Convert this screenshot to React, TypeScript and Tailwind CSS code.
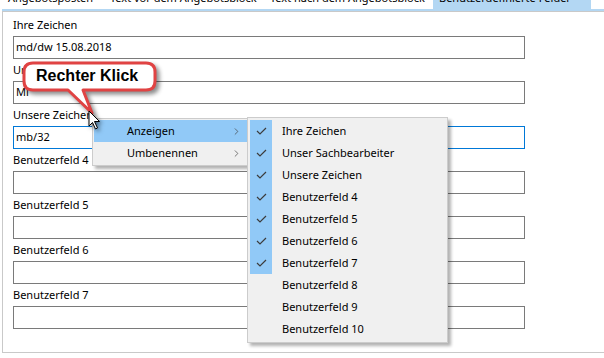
import { ChevronRight } from "lucide-react";

const fields = [
  { label: "Ihre Zeichen", value: "md/dw 15.08.2018" },
  { label: "Unser Sachbearbeiter", value: "Mi" },
  { label: "Unsere Zeichen", value: "mb/32", focused: true },
  { label: "Benutzerfeld 4", value: "" },
  { label: "Benutzerfeld 5", value: "" },
  { label: "Benutzerfeld 6", value: "" },
  { label: "Benutzerfeld 7", value: "" },
];

const subItems = [
  { label: "Ihre Zeichen", checked: true },
  { label: "Unser Sachbearbeiter", checked: true },
  { label: "Unsere Zeichen", checked: true },
  { label: "Benutzerfeld 4", checked: true },
  { label: "Benutzerfeld 5", checked: true },
  { label: "Benutzerfeld 6", checked: true },
  { label: "Benutzerfeld 7", checked: true },
  { label: "Benutzerfeld 8", checked: false },
  { label: "Benutzerfeld 9", checked: false },
  { label: "Benutzerfeld 10", checked: false },
];

function Check() {
  return (
    <svg width="11" height="8" viewBox="0 0 11 8" fill="none">
      <path d="M1 4 L4 7 L10 1" stroke="#3c3c3c" strokeWidth="1.2" />
    </svg>
  );
}

export default function App() {
  return (
    <div className="relative h-[358px] w-[604px] overflow-hidden bg-white font-['Noto_Sans',sans-serif] text-[11px] text-black">
      {/* tab strip, mostly scrolled off the top */}
      <div className="-mt-[13px] flex h-[22px] pl-[2px]">
        <div className="w-[102px] overflow-hidden whitespace-nowrap pl-[6px] pt-[3px] leading-[16px]">Angebotsposten</div>
        <div className="w-[160px] overflow-hidden whitespace-nowrap pl-[6px] pt-[3px] leading-[16px]">Text vor dem Angebotsblock</div>
        <div className="w-[169px] overflow-hidden whitespace-nowrap pl-[6px] pt-[3px] leading-[16px]">Text nach dem Angebotsblock</div>
        <div className="w-[158px] overflow-hidden whitespace-nowrap bg-[#b3d7f3] pl-[6px] pt-[3px] leading-[16px]">Benutzerdefinierte Felder</div>
      </div>
      <div className="ml-[2px] h-[2px] bg-[#b3d7f3]" />

      {/* panel */}
      <div className="ml-[2px] w-[620px] border-b border-l border-t border-[#c9c9c9] pb-[23px] pl-[10px] pt-[2px]">
        {fields.map((f) => (
          <div key={f.label}>
            <div className="h-[22px] pt-[3px] leading-[16px]">{f.label}</div>
            <div
              className={
                f.focused
                  ? "flex h-[23px] w-[512px] items-center border border-[#0078d7] px-[2px]"
                  : "flex h-[23px] w-[512px] items-center border border-[#7a7a7a] px-[2px]"
              }
            >
              {f.value}
            </div>
          </div>
        ))}
      </div>

      {/* context menu */}
      <div className="absolute left-[92px] top-[118px] w-[157px] border border-[#cccccc] bg-[#f0f0f0] p-[1px] shadow-[3px_3px_3px_rgba(0,0,0,0.3)]">
        <div className="flex h-[22px] items-center bg-[#91c9f7] pl-[33px] pr-[5px]">
          <span className="flex-1">Anzeigen</span>
          <ChevronRight size={11} strokeWidth={1.5} className="text-[#404040]" />
        </div>
        <div className="flex h-[22px] items-center pl-[33px] pr-[5px]">
          <span className="flex-1">Umbenennen</span>
          <ChevronRight size={11} strokeWidth={1.5} className="text-[#404040]" />
        </div>
      </div>

      {/* submenu */}
      <div className="absolute left-[247px] top-[117px] w-[201px] border border-[#cccccc] bg-[#f0f0f0] p-[2px] shadow-[3px_3px_3px_rgba(0,0,0,0.3)]">
        {subItems.map((it) => (
          <div key={it.label} className="flex h-[22px] items-center">
            <div className={it.checked ? "flex h-[22px] w-[22px] items-center justify-center bg-[#91c9f7]" : "h-[22px] w-[22px]"}>
              {it.checked && <Check />}
            </div>
            <span className="pl-[10px]">{it.label}</span>
          </div>
        ))}
      </div>

      {/* callout */}
      <svg
        className="absolute left-[18px] top-[58px] drop-shadow-[3px_3px_2px_rgba(0,0,0,0.45)]"
        width="150"
        height="62"
        viewBox="0 0 150 62"
      >
        <path
          d="M15 5 H128 Q137 5 137 14 V23 Q137 32 128 32 H65 L74 55 L50 32 H15 Q6 32 6 23 V14 Q6 5 15 5 Z"
          fill="white"
          stroke="#e04343"
          strokeWidth="3"
          strokeLinejoin="round"
        />
      </svg>
      <div className="absolute left-[36px] top-[67px] font-['Liberation_Sans',Arial,sans-serif] text-[16px] font-bold leading-[18px]">
        Rechter Klick
      </div>

      {/* mouse cursor */}
      <svg
        className="absolute left-[88px] top-[110px] drop-shadow-[2px_2px_2px_rgba(0,0,0,0.5)]"
        width="14"
        height="21"
        viewBox="0 0 14 21"
      >
        <path
          d="M1 1 L1 16 L4.5 12.5 L7.5 19 L9.5 18 L6.5 11.5 L11.5 11.5 Z"
          fill="white"
          stroke="black"
          strokeWidth="1"
          strokeLinejoin="round"
        />
      </svg>
    </div>
  );
}
